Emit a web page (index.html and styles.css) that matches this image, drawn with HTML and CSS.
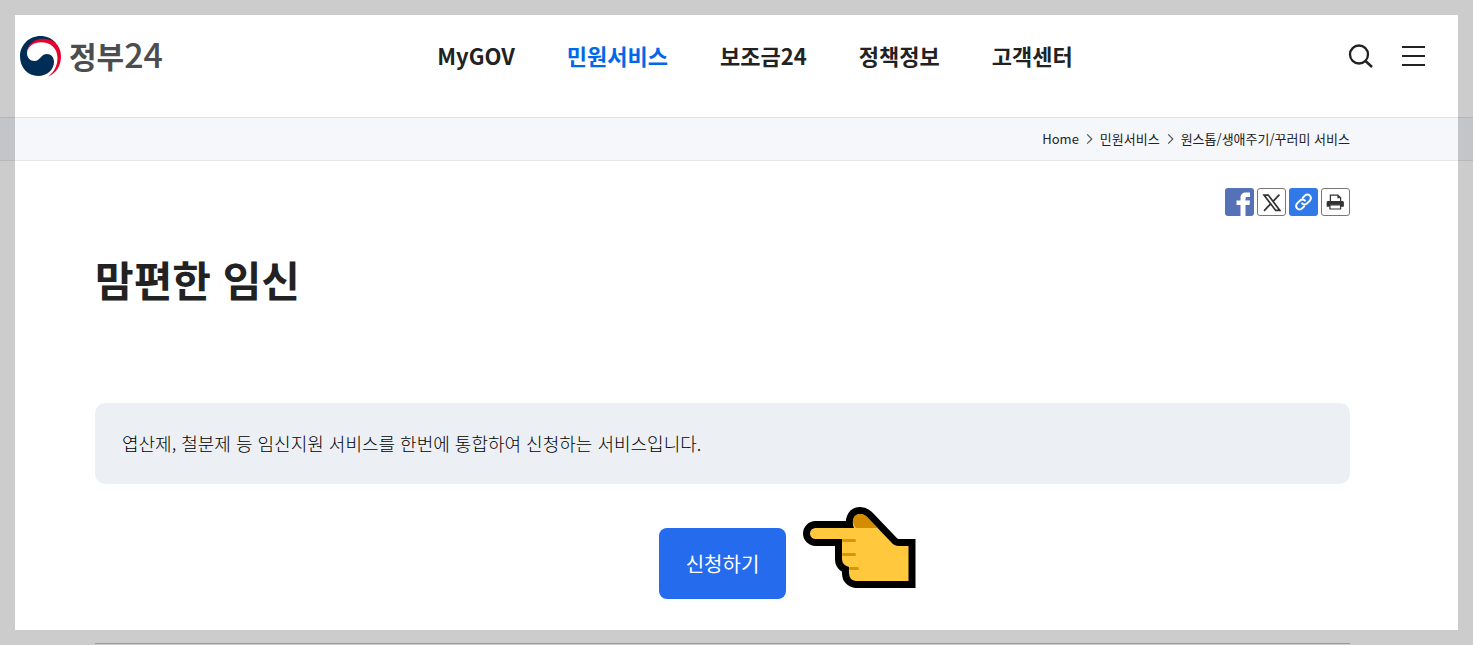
FILE: index.html
```html
<!DOCTYPE html>
<html lang="ko">
<head>
    <meta charset="UTF-8">
    <meta name="viewport" content="width=device-width, initial-scale=1.0">
    <title>맘편한 임신 | 정부24</title>
    <link rel="stylesheet" href="styles.css">
</head>
<body>
    <header class="header">
        <a href="#" class="logo">
            <svg class="emblem" viewBox="0 0 41 41" aria-hidden="true">
                <path fill="#002d56" d="M36 7C32 2.500 26.500 0 20.500 0C9 0 0 9 0 20.500C0 31.500 8 40 18 40C27.500 40 34 33.500 34 26C34 21 31 18 27 18C21 18 20 25 14.500 25C10 25 7 21.500 7 17C7 9 14 4.500 23 4.500C29 4.500 33 6 36 7Z"/>
                <path fill="#e6002d" d="M7 16.500C8 8 14.500 2.800 23 2.800C28 2.800 32 4 35 6.300C39 10 41 15 41 20.500C41 30 36 37.500 28 40.500C34.500 36 37.500 29 37.500 22C37.500 12 30.500 6.200 21 6.200C13.500 6.200 8.500 10 7 16.500Z"/>
            </svg>
            <span>정부<b>24</b></span>
        </a>
        <nav class="nav">
            <a href="#">MyGOV</a>
            <a href="#" class="active">민원서비스</a>
            <a href="#">보조금24</a>
            <a href="#">정책정보</a>
            <a href="#">고객센터</a>
        </nav>
        <div class="tools">
            <button type="button" aria-label="검색">
                <svg viewBox="0 0 26 26">
                    <circle cx="12" cy="11.500" r="9" fill="none" stroke="#222" stroke-width="2.300"/>
                    <path d="M18.500 18l6.500 6" fill="none" stroke="#222" stroke-width="2.500"/>
                </svg>
            </button>
            <button type="button" aria-label="전체메뉴">
                <svg viewBox="0 0 26 26">
                    <path d="M2 4h23M2 13h23M2 22h23" fill="none" stroke="#222" stroke-width="2"/>
                </svg>
            </button>
        </div>
    </header>

    <div class="breadcrumb">
        <a href="#">Home</a>
        <svg viewBox="0 0 6 10" aria-hidden="true"><path d="M1 1l4 4-4 4"/></svg>
        <a href="#">민원서비스</a>
        <svg viewBox="0 0 6 10" aria-hidden="true"><path d="M1 1l4 4-4 4"/></svg>
        <a href="#">원스톱/생애주기/꾸러미 서비스</a>
    </div>

    <main class="content">
        <div class="share">
            <button type="button" class="facebook" aria-label="페이스북 공유">
                <svg viewBox="0 0 29 28"><path fill="#fff" d="M15.500 28V17H11.500V12.500H15.500V10C15.500 6.500 17.500 4.500 21 4.500H25V9H22.500C21 9 20.500 9.500 20.500 11V12.500H25L24.500 17H20.500V28Z"/></svg>
            </button>
            <button type="button" class="outlined" aria-label="X 공유">
                <svg viewBox="0 0 29 28"><path fill="none" stroke="#333" stroke-width="1.800" d="M6.500 6.500H11L23.500 23H19ZM23 6L16 13.500M13 16.500L6.500 23.500"/></svg>
            </button>
            <button type="button" class="link" aria-label="링크 복사">
                <svg viewBox="0 0 29 28">
                    <g transform="rotate(-45 14.500 14)" fill="none" stroke="#fff" stroke-width="2" stroke-linecap="round">
                        <path d="M12 17.500H9a3.500 3.500 0 0 1 0-7H13a3.500 3.500 0 0 1 3.500 3.500"/>
                        <path d="M17 10.500H20a3.500 3.500 0 0 1 0 7H16a3.500 3.500 0 0 1-3.500-3.500"/>
                    </g>
                </svg>
            </button>
            <button type="button" class="outlined" aria-label="인쇄">
                <svg viewBox="0 0 29 28">
                    <path fill="#fff" stroke="#333" stroke-width="1.300" d="M9 14V6.500H17L20 9.500V14"/>
                    <path fill="#333" d="M16.500 6.500V10H20ZM6.500 13H22Q23.500 13 23.500 14.500V19H5V14.500Q5 13 6.500 13Z"/>
                    <path fill="#fff" stroke="#333" stroke-width="1.300" d="M8.500 17H20V21.500H8.500Z"/>
                </svg>
            </button>
        </div>

        <h1>맘편한 임신</h1>

        <p class="summary">엽산제, 철분제 등 임신지원 서비스를 한번에 통합하여 신청하는 서비스입니다.</p>

        <div class="apply">
            <button type="button" class="apply-btn">신청하기</button>
            <svg class="pointer" viewBox="0 0 113 81" aria-hidden="true">
                <path fill="#ffc83d" stroke="#000" stroke-width="14" paint-order="stroke" d="M12.500 21H51C48 14 51 7 57 7C60 7 62 8 64 10L88 35Q91 39 96 39H105.500V74H53Q46 73 46 66V60Q39 58 39 52V32H12.500A5.500 5.500 0 0 1 12.500 21Z"/>
                <path fill="#d48c00" d="M53 21C47.500 15 50 7 57 7C60 7 62 8 64 10L74.500 21Z"/>
                <path fill="none" stroke="#e3a01b" stroke-width="3" d="M39 33.500H51.500M39 47.500H51.500"/>
                <path fill="none" stroke="#d9940c" stroke-width="3" stroke-linecap="round" d="M41 33.500H51.500M41 47.500H51.500M47.500 61.500H54.500"/>
            </svg>
        </div>

        <hr>
    </main>
</body>
</html>
```
FILE: styles.css
```css
* {
    box-sizing: border-box;
}

body {
    margin: 0;
    background-color: #fff;
    color: #222;
    font-family: "Noto Sans CJK KR", "Noto Sans", sans-serif;
}

/* translucent frame over the page edges */
body::after {
    content: "";
    position: fixed;
    inset: 0;
    border: 15px solid rgba(0, 0, 0, 0.2);
    pointer-events: none;
}

a {
    color: inherit;
    text-decoration: none;
}

button {
    padding: 0;
    border: none;
    background: none;
    font-family: inherit;
    cursor: pointer;
}

svg {
    display: block;
}

.header {
    display: flex;
    align-items: center;
    justify-content: space-between;
    height: 117px;
    padding: 0 47px 5px 20px;
}

.logo {
    display: flex;
    align-items: center;
    gap: 8px;
    color: #4b4d4f;
    font-size: 30px;
    font-weight: 700;
    line-height: 38px;
}

.logo span {
    padding-bottom: 3px;
}

.logo b {
    font-size: 34px;
    font-weight: 500;
}

.emblem {
    width: 41px;
    height: 41px;
}

.nav {
    display: flex;
    gap: 52px;
    padding-bottom: 2px;
    font-size: 22px;
    font-weight: 700;
    line-height: 32px;
}

.nav .active {
    color: #0068eb;
}

.tools {
    display: flex;
    gap: 27px;
}

.tools svg {
    width: 26px;
    height: 26px;
}

.breadcrumb {
    display: flex;
    align-items: center;
    justify-content: flex-end;
    gap: 7px;
    height: 44px;
    padding-right: 123px;
    border-top: 1px solid #e1e2e6;
    border-bottom: 1px solid #e6e7ea;
    background-color: #f5f7fb;
    font-size: 13px;
    line-height: 18px;
}

.breadcrumb svg {
    width: 7px;
    height: 12px;
    fill: none;
    stroke: #555;
}

.content {
    padding: 27px 123px 0 95px;
}

.share {
    display: flex;
    justify-content: flex-end;
    gap: 3px;
}

.share button {
    width: 29px;
    height: 28px;
    border-radius: 3px;
    overflow: hidden;
}

.facebook {
    background-color: #5472b5;
}

.link {
    background-color: #3079e6;
}

.outlined {
    border: 1px solid #777;
    background-color: #fff;
}

h1 {
    margin: 32px 0 93px;
    font-size: 42px;
    font-weight: 700;
    line-height: 62px;
}

.summary {
    margin: 0 0 44px;
    padding: 27px;
    border-radius: 10px;
    background-color: #ecf0f5;
    color: #000;
    font-size: 18px;
    font-weight: 300;
    line-height: 27px;
}

.apply {
    position: relative;
    width: fit-content;
    margin: 0 auto 44px;
}

.apply-btn {
    display: block;
    padding: 20px 27px;
    border-radius: 8px;
    background-color: #256bed;
    color: #fff;
    font-size: 20px;
    line-height: 31px;
}

/* hand beside the button */
.pointer {
    position: absolute;
    top: -21px;
    left: 100%;
    width: 113px;
    height: 81px;
    margin-left: 17px;
}

hr {
    height: 1px;
    margin: 0;
    border: none;
    background-color: #c2c2c2;
}
```
